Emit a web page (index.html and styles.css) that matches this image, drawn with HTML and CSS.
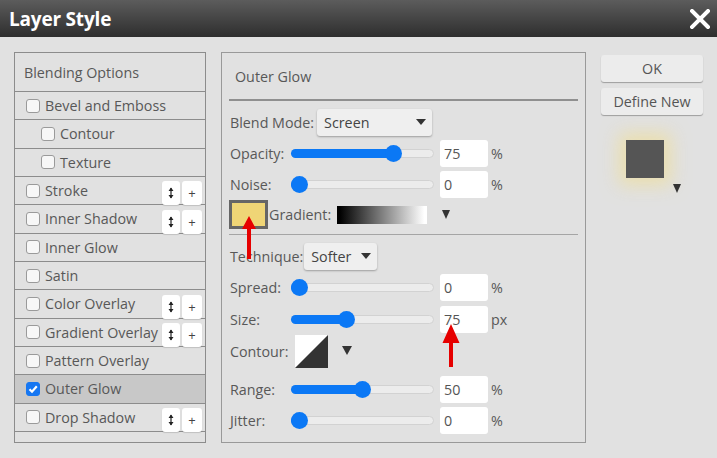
FILE: index.html
```html
<!DOCTYPE html>
<html>
<head>
<meta charset="utf-8">
<title>Layer Style</title>
<link rel="stylesheet" href="styles.css">
</head>
<body>
<div class="dialog">
  <header class="titlebar">
    <h1>Layer Style</h1>
    <svg class="close" width="20" height="20" viewBox="0 0 20 20"><path d="M2 2 L18 18 M18 2 L2 18" stroke="#fff" stroke-width="4" stroke-linecap="square"/></svg>
  </header>
  <main class="content">
    <ul class="styles-list">
      <li class="row head">Blending Options</li>
      <li class="row"><span class="cb"></span>Bevel and Emboss</li>
      <li class="row sub"><span class="cb"></span>Contour</li>
      <li class="row sub"><span class="cb"></span>Texture</li>
      <li class="row"><span class="cb"></span>Stroke<span class="tools"><span class="tbtn"><svg width="6" height="12" viewBox="0 0 6 12"><path d="M3 1 L3 11" stroke="#222" stroke-width="1.2"/><path d="M0.5 4 L3 0.5 L5.5 4 Z M0.5 8 L3 11.5 L5.5 8 Z" fill="#222"/></svg></span><span class="tbtn plus">+</span></span></li>
      <li class="row"><span class="cb"></span>Inner Shadow<span class="tools"><span class="tbtn"><svg width="6" height="12" viewBox="0 0 6 12"><path d="M3 1 L3 11" stroke="#222" stroke-width="1.2"/><path d="M0.5 4 L3 0.5 L5.5 4 Z M0.5 8 L3 11.5 L5.5 8 Z" fill="#222"/></svg></span><span class="tbtn plus">+</span></span></li>
      <li class="row"><span class="cb"></span>Inner Glow</li>
      <li class="row"><span class="cb"></span>Satin</li>
      <li class="row"><span class="cb"></span>Color Overlay<span class="tools"><span class="tbtn"><svg width="6" height="12" viewBox="0 0 6 12"><path d="M3 1 L3 11" stroke="#222" stroke-width="1.2"/><path d="M0.5 4 L3 0.5 L5.5 4 Z M0.5 8 L3 11.5 L5.5 8 Z" fill="#222"/></svg></span><span class="tbtn plus">+</span></span></li>
      <li class="row"><span class="cb"></span>Gradient Overlay<span class="tools"><span class="tbtn"><svg width="6" height="12" viewBox="0 0 6 12"><path d="M3 1 L3 11" stroke="#222" stroke-width="1.2"/><path d="M0.5 4 L3 0.5 L5.5 4 Z M0.5 8 L3 11.5 L5.5 8 Z" fill="#222"/></svg></span><span class="tbtn plus">+</span></span></li>
      <li class="row"><span class="cb"></span>Pattern Overlay</li>
      <li class="row selected"><span class="cb checked"><svg width="12" height="12" viewBox="0 0 12 12"><path d="M2.5 6.2 L5 8.7 L9.8 3.2" fill="none" stroke="#fff" stroke-width="2.2"/></svg></span>Outer Glow</li>
      <li class="row"><span class="cb"></span>Drop Shadow<span class="tools"><span class="tbtn"><svg width="6" height="12" viewBox="0 0 6 12"><path d="M3 1 L3 11" stroke="#222" stroke-width="1.2"/><path d="M0.5 4 L3 0.5 L5.5 4 Z M0.5 8 L3 11.5 L5.5 8 Z" fill="#222"/></svg></span><span class="tbtn plus">+</span></span></li>
    </ul>

    <section class="panel">
      <div class="panel-title">Outer Glow</div>
      <div class="fields">
        <div class="f-row r-blend">
          <span class="label auto">Blend Mode:</span>
          <span class="select sel-blend">Screen<i class="tri"></i></span>
        </div>
        <div class="f-row r32">
          <span class="label">Opacity:</span>
          <span class="slider" style="--v:0.75"><span class="fill"></span><span class="thumb"></span></span>
          <span class="num">75</span><span class="unit">%</span>
        </div>
        <div class="f-row r31">
          <span class="label">Noise:</span>
          <span class="slider" style="--v:0"><span class="fill"></span><span class="thumb"></span></span>
          <span class="num">0</span><span class="unit">%</span>
        </div>
        <div class="f-row r-grad">
          <span class="swatch"></span>
          <span class="grad-label">Gradient:</span>
          <span class="gradbar"></span>
          <i class="tri tri-grad"></i>
        </div>
        <hr class="sep">
        <div class="f-row r-tech">
          <span class="label auto">Technique:</span>
          <span class="select sel-tech">Softer<i class="tri"></i></span>
        </div>
        <div class="f-row r32">
          <span class="label">Spread:</span>
          <span class="slider" style="--v:0"><span class="fill"></span><span class="thumb"></span></span>
          <span class="num">0</span><span class="unit">%</span>
        </div>
        <div class="f-row r32">
          <span class="label">Size:</span>
          <span class="slider" style="--v:0.375"><span class="fill"></span><span class="thumb"></span></span>
          <span class="num">75</span><span class="unit">px</span>
        </div>
        <div class="f-row r33">
          <span class="label">Contour:</span>
          <svg class="contour" width="33" height="33" viewBox="0 0 33 33"><rect width="33" height="33" fill="#fff"/><path d="M0 33 L33 0 L33 33 Z" fill="#333"/></svg>
          <i class="tri tri-contour"></i>
        </div>
        <div class="f-row r32 r-range">
          <span class="label">Range:</span>
          <span class="slider" style="--v:0.5"><span class="fill"></span><span class="thumb"></span></span>
          <span class="num">50</span><span class="unit">%</span>
        </div>
        <div class="f-row r31">
          <span class="label">Jitter:</span>
          <span class="slider" style="--v:0"><span class="fill"></span><span class="thumb"></span></span>
          <span class="num">0</span><span class="unit">%</span>
        </div>
      </div>
      <svg class="arrow arrow-1" width="16" height="43" viewBox="0 0 16 43"><path d="M8 0 L15 13 L10 13 L10 43 L6 43 L6 13 L1 13 Z" fill="#e60000"/></svg>
      <svg class="arrow arrow-2" width="18" height="43" viewBox="0 0 18 43"><path d="M9 0 L17.5 19 L11 19 L11 43 L7 43 L7 19 L0.5 19 Z" fill="#e60000"/></svg>
    </section>

    <aside class="side">
      <span class="btn">OK</span>
      <span class="btn">Define New</span>
      <div class="preview">
        <span class="glow-box"></span>
        <i class="tri tri-preview"></i>
      </div>
    </aside>
  </main>
</div>
</body>
</html>
```

FILE: styles.css
```css
html, body {
  margin: 0;
  padding: 0;
}

body {
  width: 717px;
  height: 458px;
  overflow: hidden;
  background: #e1e1e1;
  font-family: "Open Sans", "DejaVu Sans", sans-serif;
  font-size: 14.3px;
  color: #585858;
}

.titlebar {
  height: 37px;
  box-sizing: border-box;
  background: linear-gradient(#5c5c5c, #2e2e2e);
  display: flex;
  align-items: center;
  justify-content: space-between;
  padding: 0 7px 0 9px;
}

.titlebar h1 {
  margin: 0;
  font-size: 19px;
  font-weight: 700;
  color: #fff;
  letter-spacing: -0.2px;
}

.content {
  display: flex;
  align-items: flex-start;
  gap: 15px;
  padding: 15px 0 0 14px;
}

/* left list */
.styles-list {
  list-style: none;
  margin: 0;
  padding: 0;
  width: 192px;
  height: 391px;
  box-sizing: border-box;
  border: 1px solid #8c8c8c;
}

.row {
  height: 28.33px;
  box-sizing: border-box;
  border-bottom: 1px solid #8c8c8c;
  display: flex;
  align-items: center;
  padding-left: 11px;
  white-space: nowrap;
}

.row.head {
  height: 39px;
  padding-left: 9px;
}

.row.sub {
  padding-left: 26px;
}

.row.selected {
  background: #c8c8c8;
}

.cb {
  width: 14px;
  height: 14px;
  box-sizing: border-box;
  border: 1px solid #9a9a9a;
  border-radius: 3px;
  background: #f7f7f7;
  margin-right: 5px;
  flex: none;
  display: flex;
  align-items: center;
  justify-content: center;
}

.cb.checked {
  background: #1677f2;
  border-color: #1677f2;
}

.tools {
  margin-left: auto;
  margin-right: 3px;
  align-self: flex-end;
  margin-bottom: -1px;
  display: flex;
  gap: 2px;
}

.tbtn {
  width: 18px;
  height: 24px;
  background: #fff;
  border-radius: 3px;
  box-shadow: 0 1px 1px rgba(0, 0, 0, 0.15);
  display: flex;
  align-items: center;
  justify-content: center;
  color: #333;
  font-size: 13px;
}

.tbtn.plus {
  width: 20px;
  color: #444;
}

/* middle panel */
.panel {
  position: relative;
  width: 365px;
  height: 391px;
  box-sizing: border-box;
  border: 1px solid #999;
  padding: 0 7px;
}

.panel-title {
  height: 46px;
  display: flex;
  align-items: center;
  padding-left: 6px;
  border-bottom: 2px solid #8f8f8f;
}

.fields {
  margin-top: 6px;
  padding-left: 1px;
}

.f-row {
  display: flex;
  align-items: center;
  white-space: nowrap;
}

.r-blend { height: 30px; }
.r32 { height: 32px; }
.r31 { height: 31px; }
.r33 { height: 33px; }
.r-grad { height: 29px; margin-left: -1px; }
.r-tech { height: 30px; margin-top: 6px; }
.r-range { margin-top: 5px; }

.label {
  width: 61px;
  flex: none;
}

.label.auto {
  width: auto;
  margin-right: 3px;
}

.select {
  height: 27px;
  box-sizing: border-box;
  background: #efefef;
  border-radius: 3px;
  box-shadow: 0 1px 2px rgba(0, 0, 0, 0.3);
  display: flex;
  align-items: center;
  justify-content: space-between;
  padding: 0 6px 0 7px;
  color: #444;
}

.sel-blend { width: 115px; }
.sel-tech { width: 73px; margin-left: -2px; }

.tri {
  display: inline-block;
  width: 0;
  height: 0;
  border-left: 5px solid transparent;
  border-right: 5px solid transparent;
  border-top: 6px solid #333;
}

.tri-grad {
  margin-left: 15px;
  border-left-width: 4.5px;
  border-right-width: 4.5px;
  border-top-width: 9px;
}

.tri-contour {
  margin-left: 14px;
  border-left-width: 5px;
  border-right-width: 5px;
  border-top-width: 9px;
  margin-top: -3px;
}

.slider {
  position: relative;
  width: 143px;
  height: 9px;
  box-sizing: border-box;
  border: 1px solid #d2d2d2;
  border-radius: 5px;
  background: #ececec;
  flex: none;
}

.slider .fill {
  position: absolute;
  left: -1px;
  top: -1px;
  bottom: -1px;
  width: calc(var(--v) * (100% - 16px) + 9px);
  background: #0b78f5;
  border-radius: 5px;
}

.slider .thumb {
  position: absolute;
  top: 50%;
  left: calc(var(--v) * (100% - 16px) - 1px);
  width: 17px;
  height: 17px;
  margin-top: -8.5px;
  border-radius: 50%;
  background: #0b78f5;
}

.num {
  width: 48px;
  height: 27px;
  box-sizing: border-box;
  background: #fff;
  border-radius: 3px;
  margin-left: 6px;
  padding-left: 4px;
  display: flex;
  align-items: center;
  color: #555;
}

.unit {
  margin-left: 3px;
}

.swatch {
  width: 39px;
  height: 29px;
  box-sizing: border-box;
  border: 3px solid #666;
  background: #efd576;
  flex: none;
}

.grad-label {
  margin-left: 1px;
}

.gradbar {
  width: 90px;
  height: 18px;
  margin-left: 6px;
  background: linear-gradient(to right, #000 3%, #fff 97%);
}

.sep {
  margin: 5px 0 0 -1px;
  border: 0;
  height: 1px;
  background: #a5a5a5;
}

.contour {
  margin-left: 4px;
  display: block;
}

.arrow {
  position: absolute;
}

.arrow-1 {
  left: 19px;
  top: 163px;
}

.arrow-2 {
  left: 220px;
  top: 271px;
}

/* right side */
.side {
  width: 102px;
  padding-top: 3px;
  display: flex;
  flex-direction: column;
  gap: 6px;
}

.btn {
  height: 27px;
  background: #ececec;
  border-radius: 3px;
  box-shadow: 0 1px 1px rgba(0, 0, 0, 0.3);
  display: flex;
  align-items: center;
  justify-content: center;
  color: #555;
}

.preview {
  display: flex;
  align-items: flex-end;
  padding-left: 25px;
  margin-top: 19px;
}

.glow-box {
  width: 38px;
  height: 38px;
  background: #555;
  box-shadow: 0 0 18px 7px rgba(242, 222, 140, 0.6);
}

.tri-preview {
  margin-left: 9px;
  margin-bottom: -15px;
  border-left-width: 4.5px;
  border-right-width: 4.5px;
  border-top-width: 9px;
}
```
